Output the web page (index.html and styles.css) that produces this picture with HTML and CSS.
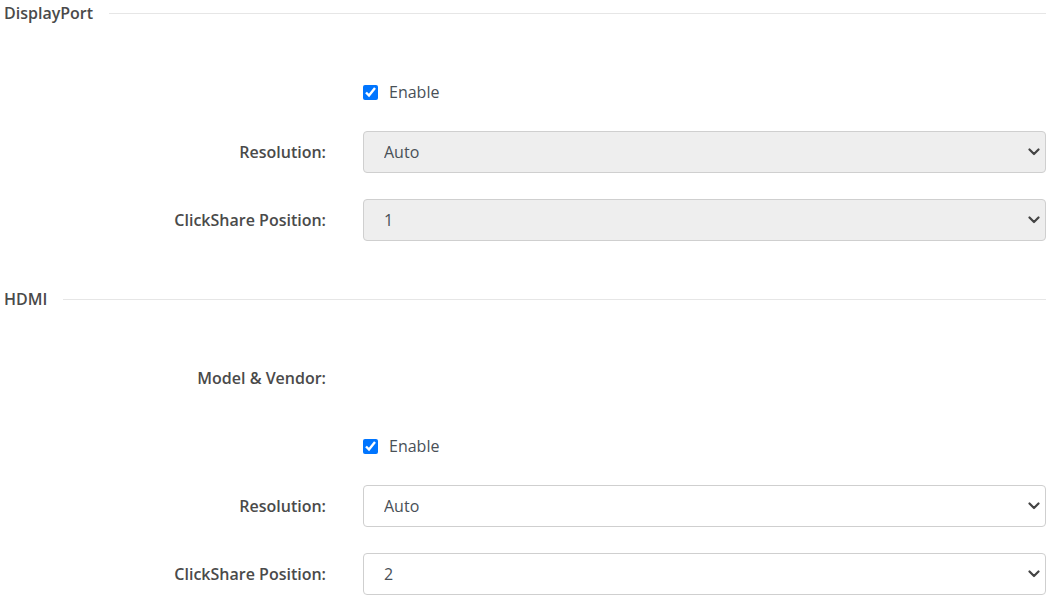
FILE: index.html
```html
<!DOCTYPE html>
<html lang="en">
<head>
  <meta charset="UTF-8">
  <meta name="viewport" content="width=device-width, initial-scale=1.0">
  <title>Outputs</title>
  <link rel="stylesheet" href="styles.css">
</head>
<body>

<div class="section">
  <div class="section-title">
    <span>DisplayPort</span>
    <div class="rule"></div>
  </div>
  <div class="section-body">
    <div class="row row-check">
      <div class="label"></div>
      <label class="check">
        <input type="checkbox" checked>
        <span>Enable</span>
      </label>
    </div>
    <div class="row">
      <div class="label">Resolution:</div>
      <div class="select-wrap">
        <select class="form-select" disabled>
          <option>Auto</option>
        </select>
        <svg class="chevron" width="12" height="8" viewBox="0 0 12 8"><path d="M1.5 1.5 L6 6 L10.5 1.5" fill="none" stroke="#444" stroke-width="2.2" stroke-linecap="round" stroke-linejoin="round"/></svg>
      </div>
    </div>
    <div class="row">
      <div class="label">ClickShare Position:</div>
      <div class="select-wrap">
        <select class="form-select" disabled>
          <option>1</option>
        </select>
        <svg class="chevron" width="12" height="8" viewBox="0 0 12 8"><path d="M1.5 1.5 L6 6 L10.5 1.5" fill="none" stroke="#444" stroke-width="2.2" stroke-linecap="round" stroke-linejoin="round"/></svg>
      </div>
    </div>
  </div>
</div>

<div class="section">
  <div class="section-title">
    <span>HDMI</span>
    <div class="rule"></div>
  </div>
  <div class="section-body">
    <div class="row">
      <div class="label">Model &amp; Vendor:</div>
      <div class="value"></div>
    </div>
    <div class="row row-check">
      <div class="label"></div>
      <label class="check">
        <input type="checkbox" checked>
        <span>Enable</span>
      </label>
    </div>
    <div class="row">
      <div class="label">Resolution:</div>
      <div class="select-wrap">
        <select class="form-select">
          <option>Auto</option>
        </select>
        <svg class="chevron" width="12" height="8" viewBox="0 0 12 8"><path d="M1.5 1.5 L6 6 L10.5 1.5" fill="none" stroke="#444" stroke-width="2.2" stroke-linecap="round" stroke-linejoin="round"/></svg>
      </div>
    </div>
    <div class="row">
      <div class="label">ClickShare Position:</div>
      <div class="select-wrap">
        <select class="form-select">
          <option>2</option>
        </select>
        <svg class="chevron" width="12" height="8" viewBox="0 0 12 8"><path d="M1.5 1.5 L6 6 L10.5 1.5" fill="none" stroke="#444" stroke-width="2.2" stroke-linecap="round" stroke-linejoin="round"/></svg>
      </div>
    </div>
  </div>
</div>

</body>
</html>
```

FILE: styles.css
```css
* {
  margin: 0;
  padding: 0;
  box-sizing: border-box;
}

body {
  font-family: 'Open Sans', sans-serif;
  background: #fff;
  color: #495057;
  padding-right: 8px;
}

.section {
  padding-bottom: 19px;
}

.section:last-child {
  padding-bottom: 0;
}

.section-title {
  display: flex;
  align-items: center;
  gap: 16px;
  height: 26px;
  padding-left: 4px;
  font-size: 16px;
  font-weight: 600;
  color: #4a4a4a;
}

.section-title .rule {
  flex: 1;
  height: 1px;
  background: #e6e6e6;
}

.section-body {
  padding-top: 45px;
}

.row {
  display: flex;
  align-items: center;
  height: 42px;
  margin-bottom: 26px;
}

.section:last-child .row:last-child {
  margin-bottom: 0;
}

.row-check {
  margin-bottom: 18px;
}

.label {
  width: 326px;
  flex-shrink: 0;
  margin-right: 37px;
  text-align: right;
  font-size: 16px;
  font-weight: 600;
  color: #4a4a4a;
}

.value {
  flex: 1;
}

.check {
  display: flex;
  align-items: center;
  gap: 11px;
  font-size: 16px;
  color: #495057;
}

.check input {
  width: 15px;
  height: 15px;
  margin: 0;
}

.select-wrap {
  position: relative;
  flex: 1;
  display: flex;
}

.form-select {
  flex: 1;
  appearance: none;
  -webkit-appearance: none;
  height: 42px;
  padding: 0 36px 0 20px;
  font-family: 'Open Sans', sans-serif;
  font-size: 16px;
  color: #495057;
  background-color: #fff;
  border: 1px solid #cfcfcf;
  border-radius: 4px;
}

.form-select:disabled {
  background-color: #eeeeee;
  color: #495057;
  opacity: 1;
}

.chevron {
  position: absolute;
  right: 6px;
  top: 17px;
  pointer-events: none;
}
```
